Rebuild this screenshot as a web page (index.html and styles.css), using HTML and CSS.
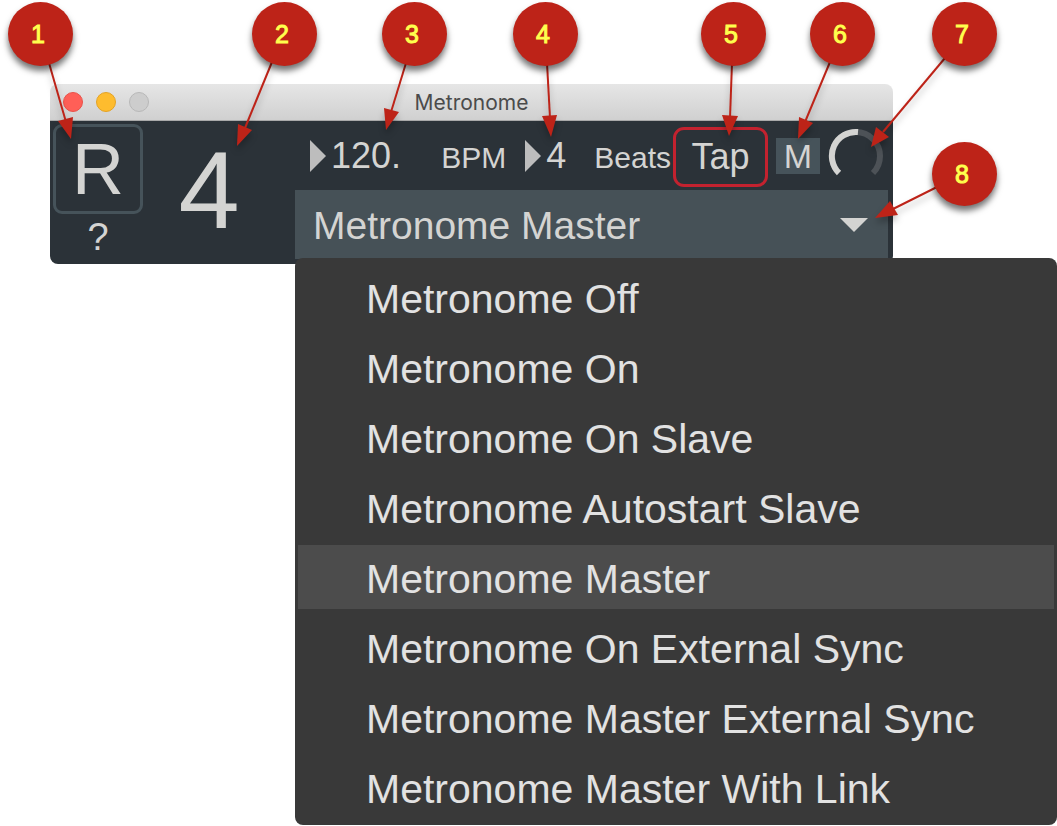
FILE: index.html
```html
<!DOCTYPE html>
<html lang="en">
  <head>
    <meta charset="UTF-8" />
    <meta name="viewport" content="width=device-width, initial-scale=1.0" />
    <title>Metronome</title>
    <link rel="stylesheet" href="styles.css">
  </head>
  <body>
    <main class="window">
      <header class="titlebar">
        <div class="lights">
          <span class="light close"></span>
          <span class="light minimize"></span>
          <span class="light zoom"></span>
        </div>
        <h1 class="title">Metronome</h1>
      </header>
      <div class="panel">
        <div class="left">
          <div class="buttons">
            <button type="button" class="reset">R</button>
            <button type="button" class="help">?</button>
          </div>
          <output class="beat">4</output>
        </div>
        <div class="right">
          <div class="controls">
            <svg class="tri" viewBox="0 0 16 32"><path d="M0 0L16 16L0 32Z" /></svg>
            <input type="text" id="bpm" class="num tempo" value="120." />
            <label for="bpm" class="unit">BPM</label>
            <svg class="tri second" viewBox="0 0 16 32"><path d="M0 0L16 16L0 32Z" /></svg>
            <input type="text" id="beats" class="num count" value="4" />
            <label for="beats" class="unit">Beats</label>
            <button type="button" class="tap">Tap</button>
            <button type="button" class="mute">M</button>
            <div class="knob">
              <svg viewBox="0 0 56 56">
                <path class="track" d="M11 45A24 24 0 1 1 45 45" />
                <path class="value" d="M11 45A24 24 0 0 1 30 4" />
              </svg>
              <input type="range" min="0" max="100" value="52" aria-label="Volume" />
            </div>
          </div>
          <div class="mode">
            <select aria-label="Mode">
              <option>Metronome Off</option>
              <option>Metronome On</option>
              <option>Metronome On Slave</option>
              <option>Metronome Autostart Slave</option>
              <option selected>Metronome Master</option>
              <option>Metronome On External Sync</option>
              <option>Metronome Master External Sync</option>
              <option>Metronome Master With Link</option>
            </select>
            <svg class="arrow" viewBox="0 0 28 14"><path d="M0 0H28L14 14Z" /></svg>
          </div>
        </div>
      </div>
      <ul class="menu" role="listbox" aria-label="Mode">
        <li role="option">Metronome Off</li>
        <li role="option">Metronome On</li>
        <li role="option">Metronome On Slave</li>
        <li role="option">Metronome Autostart Slave</li>
        <li role="option" class="active" aria-selected="true">Metronome Master</li>
        <li role="option">Metronome On External Sync</li>
        <li role="option">Metronome Master External Sync</li>
        <li role="option">Metronome Master With Link</li>
      </ul>
    </main>

    <!-- numbered callouts -->
    <div class="callouts">
      <svg class="pointers" viewBox="0 0 1057 280">
        <path d="M49 63L66 122" /><polygon points="71,139 58,121 73,117" />
        <path d="M272 62L245 128" /><polygon points="237,146 238,124 252,130" />
        <path d="M406 63L391 112" /><polygon points="386,130 384,108 399,112" />
        <path d="M547 63L550 118" /><polygon points="551,137 542,116 557,115" />
        <path d="M732 63L730 118" /><polygon points="729,136 722,115 738,116" />
        <path d="M830 62L805 122" /><polygon points="798,139 799,117 813,123" />
        <path d="M945 58L883 132" /><polygon points="871,147 876,127 889,137" />
        <path d="M937 187L893 209" /><polygon points="875,218 890,201 898,215" />
      </svg>
      <span class="badge b1">1</span>
      <span class="badge b2">2</span>
      <span class="badge b3">3</span>
      <span class="badge b4">4</span>
      <span class="badge b5">5</span>
      <span class="badge b6">6</span>
      <span class="badge b7">7</span>
      <span class="badge b8">8</span>
    </div>
  </body>
</html>
```
FILE: styles.css
```css
* {
  box-sizing: border-box;
  margin: 0;
  padding: 0;
}
body {
  position: relative;
  min-height: 100vh;
  padding: 84px 164px 0 50px;
  background-color: #fff;
  color: #d4d4d2;
  font-family: "Liberation Sans", Arial, Helvetica, sans-serif;
}
button,
input,
select {
  font-family: inherit;
  color: inherit;
  background: none;
  border: none;
}
svg {
  display: block;
}

/* window */
.window {
  position: relative;
}
.titlebar {
  display: grid;
  grid-template-columns: 1fr auto 1fr;
  align-items: center;
  height: 37px;
  padding: 0 13px;
  border-bottom: 1px solid #a9a9a9;
  border-radius: 8px 8px 0 0;
  background: linear-gradient(#e6e6e6, #d0d0d0);
}
.lights {
  display: flex;
  gap: 13px;
}
.light {
  width: 20px;
  height: 20px;
  border-radius: 50%;
  border: 1px solid #b8b8b8;
  background-color: #cdcdcd;
}
.close {
  background-color: #ff5f57;
  border-color: #e9524a;
}
.minimize {
  background-color: #febc2e;
  border-color: #e4a325;
}
.title {
  font-family: Inter, "Liberation Sans", sans-serif;
  font-size: 21px;
  font-weight: 400;
  color: #4b4b4b;
}
.panel {
  display: flex;
  height: 143px;
  background-color: #2b3238;
  border-radius: 0 0 8px 8px;
}
.left {
  display: flex;
  flex-shrink: 0;
  width: 245px;
  padding: 3px;
}
.buttons {
  display: flex;
  flex-direction: column;
  width: 90px;
}
.reset {
  height: 90px;
  border: 3px solid #46535a;
  border-radius: 9px;
  font-size: 72px;
  line-height: 84px;
}
.help {
  height: 47px;
  font-size: 38px;
}
.beat {
  width: 132px;
  font-size: 110px;
  line-height: 131px;
  text-align: center;
}

/* top row */
.right {
  flex: 1;
  min-width: 0;
  padding-right: 5px;
}
.controls {
  display: flex;
  align-items: center;
  height: 69px;
  padding: 0 4px 0 15px;
}
.controls > * {
  flex-shrink: 0;
}
.tri {
  width: 16px;
  height: 32px;
  fill: #bdbdbd;
}
.second {
  margin-left: 19px;
}
.num {
  font-size: 36px;
  height: 42px;
  margin-left: 5px;
}
.controls .tempo {
  flex: 1;
  min-width: 0;
}
.count {
  width: 48px;
}
.unit {
  font-size: 30px;
  padding-top: 5px;
}
.tap {
  width: 95px;
  height: 60px;
  margin: 2px 8px 0 2px;
  border: 3px solid #c3222f;
  border-radius: 11px;
  font-size: 36px;
}
.mute {
  width: 44px;
  height: 36px;
  margin-right: 8px;
  background-color: #46535a;
  font-size: 34px;
  line-height: 36px;
}
.knob {
  position: relative;
  width: 56px;
  height: 56px;
}
.knob path {
  fill: none;
  stroke-width: 6;
}
.knob .track {
  stroke: #4d5257;
}
.knob .value {
  stroke: #d4d4d2;
}
.knob input {
  position: absolute;
  inset: 0;
  width: 100%;
  opacity: 0;
}

/* drop-down */
.mode {
  position: relative;
  height: 69px;
  background-color: #465157;
}
.mode select {
  appearance: none;
  width: 100%;
  height: 69px;
  padding: 2px 0 0 18px;
  font-size: 39px;
}
.arrow {
  position: absolute;
  top: 28px;
  right: 20px;
  width: 28px;
  height: 14px;
  fill: #d4d4d2;
  pointer-events: none;
}
.menu {
  position: absolute;
  top: 174px;
  left: 245px;
  right: -164px;
  display: flex;
  flex-direction: column;
  gap: 6px;
  padding: 7px 3px 6px;
  border-radius: 8px;
  background-color: #393939;
  color: #e2e2e2;
  list-style: none;
}
.menu li {
  height: 64px;
  padding-left: 68px;
  font-size: 41px;
  line-height: 69px;
  white-space: nowrap;
}
.menu .active {
  background-color: #4c4c4c;
}

/* callouts */
.callouts {
  position: absolute;
  top: 0;
  left: 0;
  pointer-events: none;
}
.pointers {
  width: 1057px;
  height: 280px;
  fill: #bd2318;
  filter: drop-shadow(0 5px 3px rgba(0, 0, 0, 0.25));
}
.pointers path {
  stroke: #bd2318;
  stroke-width: 2;
}
.badge {
  position: absolute;
  top: 2px;
  width: 65px;
  height: 64px;
  padding-right: 5px;
  border-radius: 50%;
  background-color: #bd2318;
  box-shadow: 0 5px 6px rgba(0, 0, 0, 0.55);
  color: #ffff4d;
  -webkit-text-stroke: 1px #ffff4d;
  font-size: 25px;
  line-height: 64px;
  text-align: center;
}
.b1 {
  left: 8px;
}
.b2 {
  left: 252px;
}
.b3 {
  left: 382px;
}
.b4 {
  left: 513px;
}
.b5 {
  left: 701px;
}
.b6 {
  left: 810px;
}
.b7 {
  left: 932px;
}
.b8 {
  top: 142px;
  left: 932px;
}
```
